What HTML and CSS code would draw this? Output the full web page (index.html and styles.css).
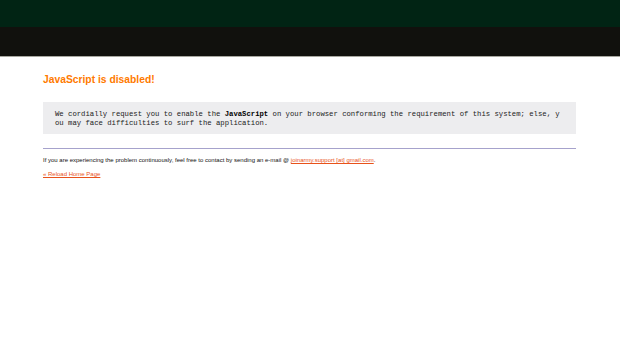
FILE: index.html
```html
<!DOCTYPE html>
<html lang="en">
<head>
    <meta charset="UTF-8">
    <meta name="viewport" content="width=device-width, initial-scale=1.0">
    <title>JavaScript is disabled</title>
    <link rel="stylesheet" href="styles.css">
</head>
<body>
    <div class="top-bar"></div>
    <div class="banner"></div>

    <div class="content">
        <h2 class="title">JavaScript is disabled!</h2>

        <div class="notice">
            We cordially request you to enable the <b>JavaScript</b> on your browser conforming the requirement of this system; else, you may face difficulties to surf the application.
        </div>

        <hr class="divider">

        <p class="contact">
            If you are experiencing the problem continuously, feel free to contact by sending an e-mail @ <a href="#">joinarmy.support [at] gmail.com</a>.
        </p>
        <p class="reload"><a href="#">&laquo; Reload Home Page</a></p>
    </div>
</body>
</html>
```

FILE: styles.css
```css
body, h2, p, hr {
    margin: 0;
    padding: 0;
}

body {
    font-family: "Liberation Sans", Arial, sans-serif;
    background-color: #ffffff;
    color: #222;
}

.top-bar {
    height: 27px;
    background-color: #012414;
}

.banner {
    height: 29px;
    background-color: #11110d;
    border-bottom: 1px solid #a8a8a0;
}

.content {
    margin: 0 44px 0 43px;
}

.title {
    margin-top: 16px;
    font-size: 10.3px;
    font-weight: bold;
    color: #ff7a00;
    line-height: 14px;
}

.notice {
    margin-top: 15px;
    padding: 8px 13px 6px 12px;
    background-color: #ededef;
    font-family: "Liberation Mono", "Courier New", monospace;
    font-size: 7.26px;
    line-height: 9px;
    color: #222;
    word-break: break-all;
}

.notice b {
    color: #000;
}

.divider {
    margin-top: 14px;
    border: none;
    border-top: 1px solid #a6a2cc;
}

.contact,
.reload {
    font-size: 6px;
    line-height: 8px;
    color: #111;
}

.contact {
    margin-top: 7px;
}

.reload {
    margin-top: 6px;
}

a {
    color: #e8521a;
}
```
